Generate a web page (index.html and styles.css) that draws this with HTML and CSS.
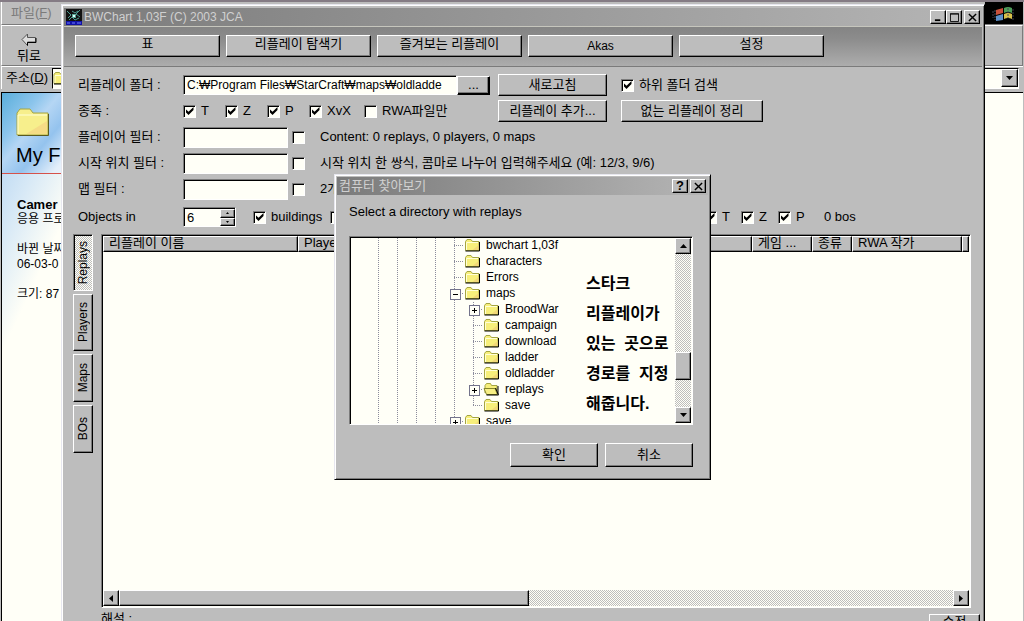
FILE: index.html
```html
<!DOCTYPE html>
<html lang="ko">
<head>
<meta charset="utf-8">
<title>BWChart</title>
<link rel="stylesheet" href="styles.css">
</head>
<body>
<svg class="defs" aria-hidden="true">
  <symbol id="folder" viewBox="0 0 16 14">
    <path d="M1 12.500V3.500L2.500 1.500H6.500L8 3.500H14.500V12.500Z" fill="#f7ef7b" stroke="#a5a542"/>
    <path d="M2 12V4.500H13.500" fill="none" stroke="#ffffd6"/>
    <path d="M8 12L14 7V12Z" fill="#f2d878"/>
    <path d="M1 13H15V4" fill="none" stroke="#000"/>
  </symbol>
  <symbol id="folder-large" viewBox="0 0 34 30">
    <path d="M1 28V6L4 2H14L17 6H32V28Z" fill="#f7ef8c" stroke="#a5a542"/>
    <path d="M2 27V8H31" fill="none" stroke="#ffffd6"/>
    <path d="M10 27L31 14V27Z" fill="#f5dc86"/>
    <path d="M2 28.500H32.500V7" fill="none" stroke="#5a5a21"/>
  </symbol>
  <symbol id="folder-open" viewBox="0 0 16 14">
    <path d="M1.500 11V3.500L3 1.500H7L8 3.500H13.500V12" fill="#f7ef7b" stroke="#a5a542"/>
    <path d="M0.500 6.500H11.500L14 12.500H3Z" fill="#f7ef84" stroke="#84842a"/>
    <path d="M12 6L15 13H3M14.500 4V12" fill="none" stroke="#000"/>
  </symbol>
</svg>

<main class="desktop">
  <section class="explorer" aria-label="탐색기">
    <div class="ex-menu"><span>파일(<u>F</u>)</span><svg class="flag" viewBox="0 0 38 22"><rect width="38" height="22"/><path d="M11 8L18 6V11L11 13Z" fill="#c9503c"/><path d="M19 6Q23 4 27 6V11Q23 9 19 11Z" fill="#4f9e5a"/><path d="M11 14L18 12V18L11 19Z" fill="#5d8fc8"/><path d="M19 12Q23 10 27 12V17Q23 15 19 17Z" fill="#d8bf4a"/><path d="M8 9V16M10 8V18M23 6V16M28 7V18" stroke="#445" stroke-dasharray="2 1"/></svg></div>
    <div class="ex-tools">
      <button class="back"><svg viewBox="0 0 16 14" width="16" height="14"><path d="M1 6.500L6.500 1V4.500H14.500V9H6.500V12.500Z" fill="#ddd" stroke="#555"/><path d="M6.500 12.500V9.500H15V5" fill="none" stroke="#000"/></svg>뒤로</button>
    </div>
    <div class="ex-address"><span>주소(<u>D</u>)</span><div class="address-box"><svg width="16" height="14"><use href="#folder"/></svg><button class="bevel drop" aria-label="주소 목록"><svg viewBox="0 0 7 4" width="7" height="4"><path d="M0 0H7L3.500 4Z"/></svg></button></div></div>
    <div class="ex-body">
      <div class="info-pane">
        <div class="sky"><svg width="34" height="30"><use href="#folder-large"/></svg><h2>My F</h2></div>
        <div class="details">
          <strong>Camer</strong><span>응용 프로</span><br><span>바뀐 날짜</span><span>06-03-0</span><br><span>크기: 87</span>
        </div>
      </div>
    </div>
  </section>

  <section class="window" aria-label="BWChart">
    <header class="title">
      <svg class="app-icon" viewBox="0 0 16 16"><path fill="#111" d="M0 0H16V16H0Z"/><path d="M1 2L5 6L2 9M14 1L10 5L14 8M6 2L9 4L12 2M3 11L6 8L9 11L13 9" fill="none" stroke="#4d9a91"/><path d="M6 5H10V9H6Z" fill="#5aa794"/><path d="M7 6H9V8H7Z" fill="#dff"/><path d="M0 12H16V16H0Z" fill="#1010a5"/><path d="M1 14H4M6 14H9M11 14H15" stroke="#6e7cff"/></svg>
      <span>BWChart 1,03F (C) 2003 JCA</span>
      <div class="caption-buttons">
        <button class="bevel cap" aria-label="최소화"><svg viewBox="0 0 10 10"><path d="M1 8H7" stroke="#000" stroke-width="2"/></svg></button><button class="bevel cap" aria-label="최대화"><svg viewBox="0 0 10 10"><path d="M.5 1H9.500V9.500H.5Z M0 1H10" fill="none" stroke="#000"/></svg></button><button class="bevel cap close" aria-label="닫기"><svg viewBox="0 0 10 10"><path d="M1 1L9 9M9 1L1 9" stroke="#000" stroke-width="1.600"/></svg></button>
      </div>
    </header>
    <nav class="toolbar">
      <button class="bevel">표</button><button class="bevel">리플레이 탐색기</button><button class="bevel">즐겨보는 리플레이</button><button class="bevel latin">Akas</button><button class="bevel">설정</button>
    </nav>

    <form class="filters">
      <div class="row">
        <label class="name" for="path">리플레이 폴더 :</label>
        <div class="field"><input class="sunken path" id="path" type="text" value="C:₩Program Files₩StarCraft₩maps₩oldladde"><button type="button" class="bevel browse">...</button></div>
        <button type="button" class="bevel wide">새로고침</button>
        <label class="check"><input type="checkbox" checked>하위 폴더 검색</label>
      </div>
      <div class="row">
        <span class="name">종족 :</span>
        <div class="field races">
          <label class="check"><input type="checkbox" checked>T</label>
          <label class="check"><input type="checkbox" checked>Z</label>
          <label class="check"><input type="checkbox" checked>P</label>
          <label class="check matchup"><input type="checkbox" checked>XvX</label>
          <label class="check"><input type="checkbox">RWA파일만</label>
        </div>
        <button type="button" class="bevel wide">리플레이 추가...</button>
        <button type="button" class="bevel wider">없는 리플레이 정리</button>
      </div>
      <div class="row">
        <label class="name" for="player">플레이어 필터 :</label>
        <input class="sunken short" id="player" type="text"><input type="checkbox" aria-label="플레이어 필터 사용">
        <span class="hint">Content: 0 replays, 0 players, 0 maps</span>
      </div>
      <div class="row">
        <label class="name" for="start">시작 위치 필터 :</label>
        <input class="sunken short" id="start" type="text"><input type="checkbox" aria-label="시작 위치 필터 사용">
        <span class="hint">시작 위치 한 쌍식, 콤마로 나누어 입력해주세요 (예: 12/3, 9/6)</span>
      </div>
      <div class="row">
        <label class="name" for="map">맵 필터 :</label>
        <input class="sunken short" id="map" type="text"><input type="checkbox" aria-label="맵 필터 사용">
        <span class="hint">2개</span>
      </div>
      <div class="row objects">
        <label class="name" for="objects">Objects in</label>
        <div class="sunken spinner"><input id="objects" type="text" value="6"><div class="steps"><button type="button" class="bevel" aria-label="증가"><svg viewBox="0 0 3 2" width="3" height="2"><path d="M0 2H3L1.500 0Z"/></svg></button><button type="button" class="bevel" aria-label="감소"><svg viewBox="0 0 3 2" width="3" height="2"><path d="M0 0H3L1.500 2Z"/></svg></button></div></div>
        <label class="check buildings"><input type="checkbox" checked>buildings</label>
        <input type="checkbox" aria-label="units">
        <div class="bo-races">
          <label class="check"><input type="checkbox" checked>T</label>
          <label class="check"><input type="checkbox" checked>Z</label>
          <label class="check"><input type="checkbox" checked>P</label>
          <span class="count">0 bos</span>
        </div>
      </div>
    </form>

    <div class="content">
      <nav class="tabs">
        <button class="bevel tab active"><span>Replays</span></button>
        <button class="bevel tab"><span>Players</span></button>
        <button class="bevel tab small"><span>Maps</span></button>
        <button class="bevel tab small"><span>BOs</span></button>
      </nav>
      <div class="sunken list">
        <div class="table-area">
        <table>
          <colgroup><col class="c-name"><col class="c-player"><col><col class="c-game"><col class="c-type"><col class="c-author"><col class="c-end"></colgroup>
          <thead><tr><th>리플레이 이름</th><th>Player</th><th></th><th>게임 ...</th><th>종류</th><th>RWA 작가</th><th></th></tr></thead>
        </table>
        </div>
        <div class="hscroll">
          <button class="bevel arrow" aria-label="왼쪽"><svg viewBox="0 0 4 7" width="4" height="7"><path d="M4 0V7L0 3.500Z"/></svg></button>
          <div class="bevel hthumb"></div>
          <button class="bevel arrow last" aria-label="오른쪽"><svg viewBox="0 0 4 7" width="4" height="7"><path d="M0 0V7L4 3.500Z"/></svg></button>
        </div>
      </div>
    </div>
    <footer class="comment"><span>해설 :</span><button class="bevel">수정</button></footer>
  </section>

  <section class="dialog" role="dialog" aria-label="컴퓨터 찾아보기">
    <header class="title dialog-title">
      <span>컴퓨터 찾아보기</span>
      <div class="caption-buttons"><button class="bevel cap help" aria-label="도움말">?</button><button class="bevel cap close" aria-label="닫기"><svg viewBox="0 0 10 10"><path d="M1 1L9 9M9 1L1 9" stroke="#000" stroke-width="1.600"/></svg></button></div>
    </header>
    <p>Select a directory with replays</p>
    <div class="sunken tree-box">
      <ul class="tree">
        <li><i></i><i></i><i></i><i></i><i class="branch"></i><svg><use href="#folder"/></svg>bwchart 1,03f</li>
        <li><i></i><i></i><i></i><i></i><i class="branch"></i><svg><use href="#folder"/></svg>characters</li>
        <li><i></i><i></i><i></i><i></i><i class="branch"></i><svg><use href="#folder"/></svg>Errors</li>
        <li><i></i><i></i><i></i><i></i><i class="branch minus"></i><svg><use href="#folder"/></svg>maps</li>
        <li><i></i><i></i><i></i><i></i><i></i><i class="branch plus"></i><svg><use href="#folder"/></svg>BroodWar</li>
        <li><i></i><i></i><i></i><i></i><i></i><i class="branch"></i><svg><use href="#folder"/></svg>campaign</li>
        <li><i></i><i></i><i></i><i></i><i></i><i class="branch"></i><svg><use href="#folder"/></svg>download</li>
        <li><i></i><i></i><i></i><i></i><i></i><i class="branch"></i><svg><use href="#folder"/></svg>ladder</li>
        <li><i></i><i></i><i></i><i></i><i></i><i class="branch"></i><svg><use href="#folder"/></svg>oldladder</li>
        <li><i></i><i></i><i></i><i></i><i></i><i class="branch plus"></i><svg><use href="#folder-open"/></svg>replays</li>
        <li><i></i><i></i><i></i><i></i><i></i><i class="branch end"></i><svg><use href="#folder"/></svg>save</li>
        <li><i></i><i></i><i></i><i></i><i class="branch plus"></i><svg><use href="#folder"/></svg>save</li>
      </ul>
      <div class="note">스타크<br>리플레이가<br>있는&nbsp; 곳으로<br>경로를&nbsp; 지정<br>해줍니다.</div>
      <div class="vscroll">
        <button class="bevel arrow" aria-label="위로"><svg viewBox="0 0 7 4" width="7" height="4"><path d="M0 4H7L3.500 0Z"/></svg></button>
        <div class="bevel vthumb"></div>
        <button class="bevel arrow last" aria-label="아래로"><svg viewBox="0 0 7 4" width="7" height="4"><path d="M0 0H7L3.500 4Z"/></svg></button>
      </div>
    </div>
    <div class="actions"><button class="bevel">확인</button><button class="bevel">취소</button></div>
  </section>
</main>
</body>
</html>
```

FILE: styles.css
```css
:root {
  --face: #bdbdbd;
  --paper: #fffff7;
  --dither: repeating-conic-gradient(#bdbdbd 0 25%, #fffff7 0 50%) 0 0 / 2px 2px;
}
* { box-sizing: border-box; }
body {
  margin: 0;
  font: 13px/16px "Liberation Sans", "Noto Sans CJK KR", sans-serif;
  color: #000;
}
button, input { font: inherit; color: inherit; margin: 0; border-radius: 0; }
button { padding: 0; white-space: nowrap; }
.defs { display: none; }
.desktop { position: relative; height: 100vh; overflow: hidden; background: var(--face); }

.bevel {
  background: var(--face);
  border: 1px solid;
  border-color: #fff #000 #000 #fff;
  box-shadow: inset -1px -1px #7b7b7b;
  display: flex;
  align-items: center;
  justify-content: center;
}
.sunken {
  background: var(--paper);
  border: 1px solid;
  border-color: #7b7b7b #fff #fff #7b7b7b;
  box-shadow: inset 1px 1px #000;
}

/* background browser window */
.explorer { height: 100%; display: flex; flex-direction: column; border-top: 2px solid #847b84; padding: 0 1px; font-size: 12px; }
.ex-menu { height: 23px; display: flex; justify-content: space-between; align-items: center; color: #7b7b7b; padding-left: 9px; border-bottom: 1px solid #7b7b7b; border-left: 1px solid #fff; font-size: 13px; }
.flag { width: 38px; height: 22px; }
.ex-tools { height: 41px; border: 1px solid; border-color: #fff #7b7b7b #7b7b7b #fff; padding: 7px 15px; }
.back { display: flex; flex-direction: column; align-items: center; border: 0; background: none; font-size: 13px; line-height: 17px; }
.ex-address { height: 23px; display: flex; align-items: center; gap: 4px; padding-left: 4px; border-top: 1px solid #fff; border-left: 1px solid #fff; font-size: 13px; }
.address-box { flex: 1; height: 21px; display: flex; align-items: center; justify-content: space-between; background: var(--paper); border: 1px solid #fff; border-top-color: #000; border-left-color: #000; margin-right: 4px; }
.drop { width: 17px; height: 18px; }
.ex-body { flex: 1; margin-top: 3px; background: var(--paper); border-left: 1px solid #000; border-top: 1px solid #000; }
.info-pane { width: 59px; height: 100%; overflow: hidden; white-space: nowrap; background: linear-gradient(115deg, #a8cdf0 0, #d6e8f6 60px, transparent 110px) no-repeat; }
.sky { height: 81px; padding: 14px 14px 0; border-bottom: 1px solid #d6524a; background: linear-gradient(130deg, #5aaedb 0, #8cc5ec 30px, #b5d6f4 45px, #94c3ee 65px, #e4effa 90px, #fff 130px); }
.sky svg { display: block; }
.sky h2 { margin: 6px 0 0; font-size: 20px; line-height: 24px; font-weight: 400; }
.details { display: flex; flex-direction: column; padding: 23px 0 23px 15px; line-height: 15px; }
.details strong { font-size: 13px; }

/* main window */
.window { position: absolute; left: 61px; right: 39px; top: 4px; bottom: -16px; background: var(--face); border: 1px solid; border-color: #e7e7ef #000 #000 #e7e7ef; box-shadow: inset 1px 1px #fff, inset -1px -1px #7b7b7b; padding: 3px 2px; display: flex; flex-direction: column; }
.title { height: 18px; display: flex; align-items: center; gap: 2px; color: #d0d0d0; background: linear-gradient(90deg, #7b7b7b, #b5b5b5); padding: 0 2px; font-size: 12px; }
.dialog-title { font-size: 13px; }
.app-icon { width: 16px; height: 16px; }
.caption-buttons { margin-left: auto; display: flex; }
.cap { width: 16px; height: 14px; color: #000; }
.cap svg { width: 9px; height: 9px; }
.close { margin-left: 2px; }
.help { font-weight: 700; font-size: 13px; line-height: 12px; }
.toolbar { height: 41px; flex: none; display: flex; gap: 6px; padding: 8px 11px; border-top: 1px solid #c6c6bd; border-bottom: 1px solid #7b7b7b; background: linear-gradient(#848484, #8c8c8c 30%, #adadad); }
.toolbar button { width: 145px; height: 22px; padding-bottom: 4px; }
.toolbar .latin { font-size: 12px; padding-bottom: 0; }

.filters { padding: 5px 14px 2px; }
.row { height: 26px; display: flex; align-items: center; white-space: nowrap; }
.name { width: 105px; flex: none; }
.field { width: 315px; display: flex; align-items: center; }
.path { width: 274px; height: 20px; padding: 0 3px; font-size: 12px; }
.browse { width: 33px; height: 19px; border-color: #fff #000 #000 #fff; box-shadow: inset -1px -1px #000, inset -2px -2px #7b7b7b; }
.wide, .wider { height: 22px; margin-right: 14px; }
.wide { width: 109px; }
.wider { width: 142px; }
input[type="checkbox"] { appearance: none; width: 13px; height: 13px; flex: none; background: var(--paper); border: 1px solid; border-color: #7b7b7b #fff #fff #7b7b7b; box-shadow: inset 1px 1px #000; display: grid; place-items: center; }
input[type="checkbox"]:checked::before { content: ""; width: 8px; height: 8px; background: #000; clip-path: polygon(0 25%, 38% 60%, 100% 0, 100% 38%, 38% 100%, 0 62%); }
.check { display: flex; align-items: center; gap: 5px; }
.races .check { width: 42px; }
.races .matchup { width: 55px; }
.short { width: 105px; height: 21px; margin-right: 4px; padding: 0 3px; }
.hint { margin-left: 15px; }
.objects { height: 30px; }
.spinner { width: 53px; height: 20px; display: flex; padding: 1px 0 0 1px; }
.spinner input { flex: 1; min-width: 0; border: 0; padding: 0 2px; background: none; outline: 0; }
.steps { width: 15px; display: flex; flex-direction: column; }
.steps button { flex: 1; }
.buildings { width: 77px; margin-left: 17px; }
.bo-races { display: flex; margin-left: 361px; }
.bo-races .check { width: 37px; }
.count { margin-left: 9px; }

.content { flex: 1; display: flex; gap: 8px; padding: 0 11px 0 9px; }
.tabs { width: 20px; display: flex; flex-direction: column; gap: 3px; font-size: 12px; }
.tab { height: 57px; }
.tab.small { height: 48px; }
.tab span { writing-mode: vertical-rl; transform: rotate(180deg); }
.active { background: var(--dither); border-color: #7b7b7b #fff #fff #7b7b7b; box-shadow: inset 1px 1px #000; }
.list { flex: 1; display: flex; flex-direction: column; padding: 1px; }
.table-area { flex: 1; }
table { width: 100%; table-layout: fixed; border-collapse: separate; border-spacing: 0; }
th { height: 16px; padding: 0 5px; font-weight: 400; line-height: 12px; vertical-align: top; text-align: left; white-space: nowrap; background: var(--face); border: 1px solid; border-color: #fff #000 #000 #fff; box-shadow: inset -1px -1px #7b7b7b; }
.c-name { width: 195px; }
.c-player { width: 120px; }
.c-game { width: 60px; }
.c-type { width: 40px; }
.c-author { width: 110px; }
.c-end { width: 7px; }
th:last-child { padding: 0; }
.hscroll { height: 16px; display: flex; background: var(--dither); }
.arrow { width: 16px; height: 16px; flex: none; }
.hthumb { width: 410px; }
.hscroll .last { margin-left: auto; }
.comment { height: 25px; display: flex; justify-content: space-between; align-items: flex-start; padding: 3px 2px 0 37px; }
.comment button { width: 51px; height: 22px; margin-top: 3px; padding-bottom: 6px; }

/* folder picker */
.dialog { position: absolute; left: 334px; top: 174px; width: 377px; background: var(--face); border: 1px solid; border-color: #e7e7ef #000 #000 #e7e7ef; box-shadow: inset 1px 1px #fff, inset -1px -1px #7b7b7b; padding: 2px 2px 12px; }
.dialog p { margin: 0; padding: 9px 12px 16px; }
.tree-box { position: relative; margin: 0 15px 0 12px; height: 189px; display: flex; padding: 1px; overflow: hidden; font-size: 12px; }
.tree { flex: 1; margin: 0; padding: 0 0 0 17px; list-style: none; }
.tree li { height: 16px; line-height: 15px; display: flex; }
.tree li svg { width: 17px; height: 14px; margin: 0 5px 0 1px; }
.tree i { position: relative; width: 19px; background: repeating-linear-gradient(#8c8c9c 0 1px, transparent 1px 2px) 10px 0 / 1px 100% no-repeat; }
.tree .branch { background: repeating-linear-gradient(#8c8c9c 0 1px, transparent 1px 2px) 10px 0 / 1px 100% no-repeat, repeating-linear-gradient(90deg, #8c8c9c 0 1px, transparent 1px 2px) 10px 7px / 9px 1px no-repeat; }
.tree .end { background-size: 1px 8px, 9px 1px; }
.plus::before, .minus::before { content: ""; position: absolute; left: 6px; top: 3px; width: 9px; height: 9px; border: 1px solid #73738c; background: linear-gradient(#000, #000) center / 5px 1px no-repeat, var(--paper); }
.plus::before { background: linear-gradient(#000, #000) center / 5px 1px no-repeat, linear-gradient(#000, #000) center / 1px 5px no-repeat, var(--paper); }
.note { position: absolute; left: 236px; top: 32px; font-size: 16px; line-height: 30px; font-weight: 700; white-space: nowrap; }
.vscroll { width: 16px; display: flex; flex-direction: column; background: var(--dither); }
.vthumb { height: 28px; margin-top: 98px; }
.vscroll .last { margin-top: auto; }
.actions { display: flex; justify-content: flex-end; gap: 7px; padding: 18px 15px 0 0; }
.actions button { width: 88px; height: 24px; }
```
